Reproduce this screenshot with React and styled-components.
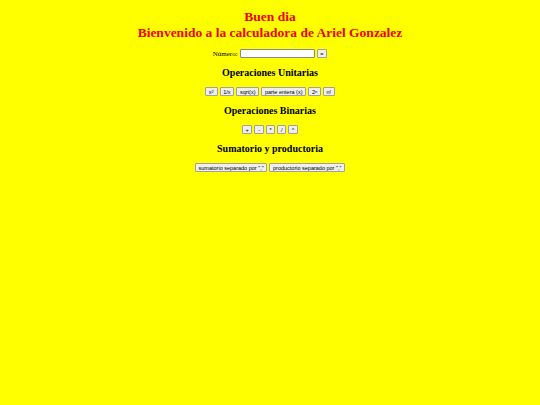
import React from 'react';
import styled, { createGlobalStyle } from 'styled-components';

const GlobalStyle = createGlobalStyle`
    html, body {
        margin: 0;
        padding: 0;
        background: #ffff00;
        height: 100%;
    }
    body {
        font-family: "Liberation Serif", "Times New Roman", serif;
    }
`;

export default function App() {
    return (
        <Page>
            <GlobalStyle />
            <Title>
                Buen dia<br />
                Bienvenido a la calculadora de Ariel Gonzalez
            </Title>

            <InputRow>
                <Label>Número:</Label>
                <NumberInput type='text' />
                <SmallButton>=</SmallButton>
            </InputRow>

            <Heading>Operaciones Unitarias</Heading>
            <ButtonRow>
                <SmallButton>x<sup>2</sup></SmallButton>
                <SmallButton>1/x</SmallButton>
                <SmallButton>sqrt(x)</SmallButton>
                <SmallButton>parte entera (x)</SmallButton>
                <SmallButton>2<sup>n</sup></SmallButton>
                <SmallButton>n!</SmallButton>
            </ButtonRow>

            <Heading>Operaciones Binarias</Heading>
            <ButtonRow>
                <SmallButton>+</SmallButton>
                <SmallButton>-</SmallButton>
                <SmallButton>*</SmallButton>
                <SmallButton>/</SmallButton>
                <SmallButton>^</SmallButton>
            </ButtonRow>

            <Heading>Sumatorio y productoria</Heading>
            <ButtonRow>
                <SmallButton>sumatorio separado por ","</SmallButton>
                <SmallButton>productorio separado por ","</SmallButton>
            </ButtonRow>
        </Page>
    );
}

const Page = styled.div`
    display: flex;
    flex-direction: column;
    align-items: center;
    padding-top: 9px;
    min-height: 405px;
    box-sizing: border-box;
    background: #ffff00;
`;

const Title = styled.h1`
    margin: 0;
    color: #f00000;
    font-size: 13.5px;
    line-height: 16px;
    font-weight: bold;
    text-align: center;
`;

const InputRow = styled.div`
    display: flex;
    align-items: center;
    gap: 2px;
    margin-top: 8px;
`;

const Label = styled.span`
    font-size: 7px;
    color: #000;
`;

const NumberInput = styled.input`
    width: 75px;
    height: 9px;
    padding: 0;
    border: 1px solid #8a8a8a;
    border-radius: 1px;
    background: #fff;
    box-sizing: border-box;
`;

const Heading = styled.h3`
    margin: 9px 0 9px 0;
    font-size: 10px;
    line-height: 11px;
    font-weight: bold;
    color: #000;
`;

const ButtonRow = styled.div`
    display: flex;
    gap: 2px;
`;

const SmallButton = styled.button`
    font-family: "Liberation Sans", Arial, sans-serif;
    font-size: 5.5px;
    line-height: 6px;
    padding: 1px 2.7px;
    border: 1px solid #a0a0a0;
    border-radius: 1px;
    background: #efefef;
    color: #000;
    height: 9px;
    display: flex;
    align-items: center;

    sup {
        font-size: 4px;
        line-height: 0;
        vertical-align: 2px;
    }
`;
